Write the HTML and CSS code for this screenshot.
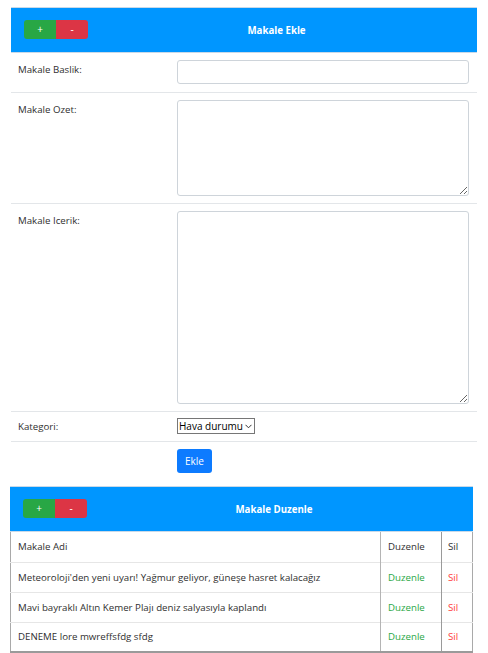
FILE: index.html
```html
<!DOCTYPE html>
<html lang="tr">
<head>
<meta charset="utf-8">
<title>Makale</title>
<link rel="stylesheet" href="styles.css">
</head>
<body>
<section class="panel panel-add">
  <div class="bar">
    <div class="toggles">
      <button class="tbtn plus">+</button>
      <button class="tbtn minus">-</button>
    </div>
    <div class="bar-title">Makale Ekle</div>
  </div>
  <div class="frow r-title">
    <label class="flabel">Makale Baslik:</label>
    <div class="fctl"><input class="inp" type="text"></div>
  </div>
  <div class="frow r-ozet">
    <label class="flabel">Makale Ozet:</label>
    <div class="fctl"><textarea class="ta ta-ozet"></textarea></div>
  </div>
  <div class="frow r-icerik">
    <label class="flabel">Makale Icerik:</label>
    <div class="fctl"><textarea class="ta ta-icerik"></textarea></div>
  </div>
  <div class="frow r-kat">
    <label class="flabel">Kategori:</label>
    <div class="fctl">
      <div class="sel"><span>Hava durumu</span><svg class="chev" width="7" height="5" viewBox="0 0 7 5"><path d="M0.5 0.8 L3.5 3.8 L6.5 0.8" fill="none" stroke="#333" stroke-width="1"/></svg></div>
    </div>
  </div>
  <div class="frow r-btn">
    <div class="flabel"></div>
    <div class="fctl"><button class="ekle">Ekle</button></div>
  </div>
</section>

<section class="panel panel-edit">
  <div class="bar">
    <div class="toggles">
      <button class="tbtn plus">+</button>
      <button class="tbtn minus">-</button>
    </div>
    <div class="bar-title">Makale Duzenle</div>
  </div>
  <table class="tbl">
    <tr><td class="c1">Makale Adi</td><td class="c2">Duzenle</td><td class="c3">Sil</td></tr>
    <tr><td class="c1">Meteoroloji'den yeni uyarı! Yağmur geliyor, güneşe hasret kalacağız</td><td class="c2 green">Duzenle</td><td class="c3 red">Sil</td></tr>
    <tr><td class="c1">Mavi bayraklı Altın Kemer Plajı deniz salyasıyla kaplandı</td><td class="c2 green">Duzenle</td><td class="c3 red">Sil</td></tr>
    <tr><td class="c1">DENEME lore mwreffsfdg sfdg</td><td class="c2 green">Duzenle</td><td class="c3 red">Sil</td></tr>
  </table>
</section>
</body>
</html>
```
FILE: styles.css
```css
* { box-sizing: border-box; }
html, body { margin: 0; padding: 0; background: #fff; }
body {
  font-family: "Open Sans", "Liberation Sans", sans-serif;
  font-size: 9.7px;
  color: #2f2f2f;
}
.panel-add { margin: 7px 0 0 11px; width: 466px; }
.panel-edit { margin: 6px 0 0 10px; width: 463px; }

.bar {
  height: 46px;
  background: #0096ff;
  border-top: 1px solid #c9d9e8;
  border-bottom: 1px solid #c9d9e8;
  display: flex;
  align-items: center;
  padding: 0 12px 0 13px;
}
.toggles { display: flex; margin-top: -1px; }
.tbtn {
  width: 32px; height: 19px;
  border: none; padding: 0; margin: 0;
  color: #fff; font-family: inherit; font-size: 10px;
  line-height: 19px;
}
.plus { background: #28a745; border-radius: 3px 0 0 3px; }
.minus { background: #dc3545; border-radius: 0 3px 3px 0; }
.bar-title {
  flex: 1;
  text-align: center;
  color: #fff;
  font-weight: bold;
  font-size: 9.7px;
}

.frow {
  display: flex;
  border-bottom: 1px solid #e3e6e9;
  padding: 7px 8px 7px 7px;
}
.flabel { width: 159px; padding-top: 3px; line-height: 14px; }
.fctl { flex: 1; }
.r-title { padding: 7px 8px 8px 7px; }
.inp {
  display: block; width: 100%; height: 24px;
  border: 1px solid #ced4da; border-radius: 3px;
  background: #fff;
}
.ta {
  display: block; width: 100%;
  border: 1px solid #ced4da; border-radius: 3px;
  background: #fff; resize: vertical;
}
.ta-ozet { height: 96px; }
.ta-icerik { height: 193px; }
.r-kat { padding: 6px 8px 7px 7px; }
.r-kat .flabel { padding-top: 2px; }
.sel {
  display: inline-flex; align-items: center; gap: 2px;
  height: 16px;
  border: 1px solid #767676;
  padding: 0 2px 0 1px;
  color: #000; font-size: 10px; background: #fff;
  white-space: nowrap;
}
.chev { margin-top: 1px; }
.r-btn { border-bottom: none; padding: 7px 8px 7px 7px; }
.ekle {
  display: block;
  height: 24px; width: 35px;
  background: #0d7bff; color: #fff;
  border: none; border-radius: 3px;
  font-family: inherit; font-size: 10px; padding: 0;
}

.tbl {
  width: 463px;
  border-collapse: collapse;
  border-left: 1px solid #a9a9a9;
  border-right: 1px solid #a9a9a9;
  border-bottom: 2px solid #9a9a9a;
}
.tbl td {
  height: 30px;
  padding: 0 7px;
  border-top: 1px solid #e6e6e6;
  vertical-align: middle;
}
.tbl tr:first-child td { border-top: none; }
.tbl .c1 { width: 370px; }
.tbl .c2 { width: 61px; border-left: 1px solid #b4b4b4; border-right: 1px solid #9a9a9a; padding-left: 7px; }
.tbl .c3 { padding-left: 6px; }
.green { color: #28a745; }
.red { color: #ff3b3b; }
```
